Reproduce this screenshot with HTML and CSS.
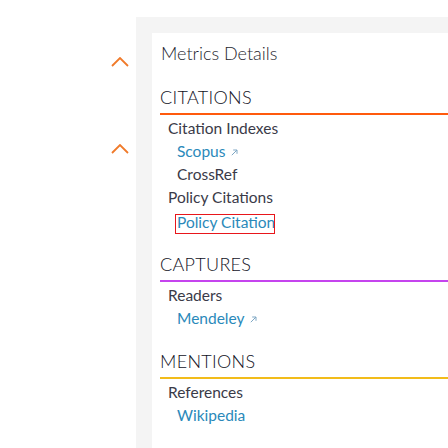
FILE: index.html
```html
<!DOCTYPE html>
<html>
<head>
<meta charset="utf-8">
<link rel="stylesheet" href="styles.css">
</head>
<body>
<div class="layout">
  <aside class="rail">
    <button class="toggle toggle-first" aria-label="Collapse">
      <svg width="18" height="10" viewBox="0 0 18 10"><path d="M1 9 L9 1 L17 9" fill="none" stroke="#f07a2a" stroke-width="1.8"/></svg>
    </button>
    <button class="toggle toggle-second" aria-label="Collapse">
      <svg width="18" height="10" viewBox="0 0 18 10"><path d="M1 9 L9 1 L17 9" fill="none" stroke="#f07a2a" stroke-width="1.8"/></svg>
    </button>
  </aside>
  <main class="panel">
    <section class="card">
      <h1 class="title">Metrics Details</h1>

      <h2 class="section-head citations">CITATIONS</h2>
      <ul class="list">
        <li class="group">Citation Indexes</li>
        <li class="item link">Scopus <svg class="ext" width="7" height="7" viewBox="0 0 7 7"><path d="M0.8 6.2 L6 1 M2.2 1 H6 V4.8" fill="none" stroke="#7ea7c4" stroke-width="1"/></svg></li>
        <li class="item">CrossRef</li>
        <li class="group">Policy Citations</li>
        <li class="item"><span class="boxed link">Policy Citation</span></li>
      </ul>

      <h2 class="section-head captures">CAPTURES</h2>
      <ul class="list">
        <li class="group">Readers</li>
        <li class="item link">Mendeley <svg class="ext" width="7" height="7" viewBox="0 0 7 7"><path d="M0.8 6.2 L6 1 M2.2 1 H6 V4.8" fill="none" stroke="#7ea7c4" stroke-width="1"/></svg></li>
      </ul>

      <h2 class="section-head mentions">MENTIONS</h2>
      <ul class="list">
        <li class="group">References</li>
        <li class="item link">Wikipedia</li>
      </ul>
    </section>
  </main>
</div>
</body>
</html>
```

FILE: styles.css
```css
html, body {
  margin: 0;
  padding: 0;
  background: #ffffff;
}

body {
  font-family: Lato, "Open Sans", sans-serif;
  color: #3a3a48;
  height: 448px;
  overflow: hidden;
}

.layout {
  display: grid;
  grid-template-columns: 136px 1fr;
  height: 448px;
}

.rail {
  display: flex;
  flex-direction: column;
  align-items: flex-end;
  padding-right: 7px;
}

.toggle {
  border: 0;
  background: none;
  padding: 0;
  width: 18px;
  height: 10px;
  display: block;
  cursor: pointer;
}

.toggle svg {
  display: block;
}

.toggle-first {
  margin-top: 57px;
}

.toggle-second {
  margin-top: 77px;
}

.panel {
  margin-top: 17px;
  background: #f4f4f4;
  padding: 16px 0 0 16px;
  display: flex;
}

.card {
  flex: 1;
  background: #ffffff;
  padding: 9px 0 0 8px;
}

.title {
  margin: 0;
  font-size: 18px;
  font-weight: 300;
  line-height: 22px;
  color: #1e1e2e;
  padding-left: 1px;
}

.section-head {
  margin: 0;
  font-size: 18px;
  font-weight: 300;
  line-height: 22px;
  letter-spacing: 0.3px;
  color: #12121e;
  padding-bottom: 5px;
  border-bottom: 2px solid;
}

.citations {
  margin-top: 22px;
  border-bottom-color: #ff5a0d;
}

.captures {
  margin-top: 19px;
  border-bottom-color: #c544ee;
}

.mentions {
  margin-top: 20px;
  border-bottom-color: #f2bc1a;
}

.list {
  list-style: none;
  margin: 0;
  padding: 2px 0 0 0;
  font-size: 15.5px;
  font-weight: 400;
  line-height: 23px;
}

.group {
  padding-left: 8px;
}

.item {
  padding-left: 17px;
}

.link {
  color: #2a89ba;
}

.ext {
  margin-left: 2px;
  vertical-align: 1px;
}

.boxed {
  display: inline-block;
  box-sizing: border-box;
  width: 100px;
  height: 20px;
  line-height: 12px;
  padding-top: 1px;
  border: 1px solid #e8161b;
  margin-left: -2px;
  padding-left: 1px;
  white-space: nowrap;
  overflow: hidden;
  vertical-align: top;
  margin-top: 5px;
}
```
